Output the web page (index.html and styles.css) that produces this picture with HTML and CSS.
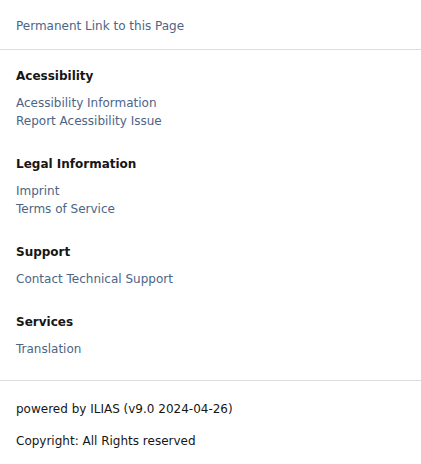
FILE: index.html
```html
<!DOCTYPE html>
<html lang="en">
<head>
  <meta charset="UTF-8" />
  <meta name="viewport" content="width=device-width, initial-scale=1.0" />
  <title>Footer</title>
  <link rel="stylesheet" href="styles.css">
</head>
<body>
  <footer class="footer">
    <div class="permalink">
      <a href="#">Permanent Link to this Page</a>
    </div>

    <div class="link-groups">
      <section class="group">
        <h2>Acessibility</h2>
        <ul>
          <li><a href="#">Acessibility Information</a></li>
          <li><a href="#">Report Acessibility Issue</a></li>
        </ul>
      </section>

      <section class="group">
        <h2>Legal Information</h2>
        <ul>
          <li><a href="#">Imprint</a></li>
          <li><a href="#">Terms of Service</a></li>
        </ul>
      </section>

      <section class="group">
        <h2>Support</h2>
        <ul>
          <li><a href="#">Contact Technical Support</a></li>
        </ul>
      </section>

      <section class="group">
        <h2>Services</h2>
        <ul>
          <li><a href="#">Translation</a></li>
        </ul>
      </section>
    </div>

    <div class="meta">
      <p>powered by ILIAS (v9.0 2024-04-26)</p>
      <p>Copyright: All Rights reserved</p>
    </div>
  </footer>
</body>
</html>
```

FILE: styles.css
```css
* {
  box-sizing: border-box;
  margin: 0;
  padding: 0;
}

body {
  font-family: Verdana, "DejaVu Sans", sans-serif;
  font-size: 12px;
  line-height: 18px;
  color: #161616;
  background: #fff;
}

a {
  color: #4c6586;
  text-decoration: none;
}

.permalink {
  padding: 17px 16px 14px;
  border-bottom: 1px solid #dddddd;
}

.link-groups {
  padding: 17px 16px 22px;
  border-bottom: 1px solid #dddddd;
}

.group + .group {
  margin-top: 25px;
}

.group h2 {
  font-size: 12px;
  font-weight: bold;
  margin-bottom: 9px;
}

.group ul {
  list-style: none;
}

.meta {
  padding: 19px 16px;
}

.meta p + p {
  margin-top: 14px;
}
```
